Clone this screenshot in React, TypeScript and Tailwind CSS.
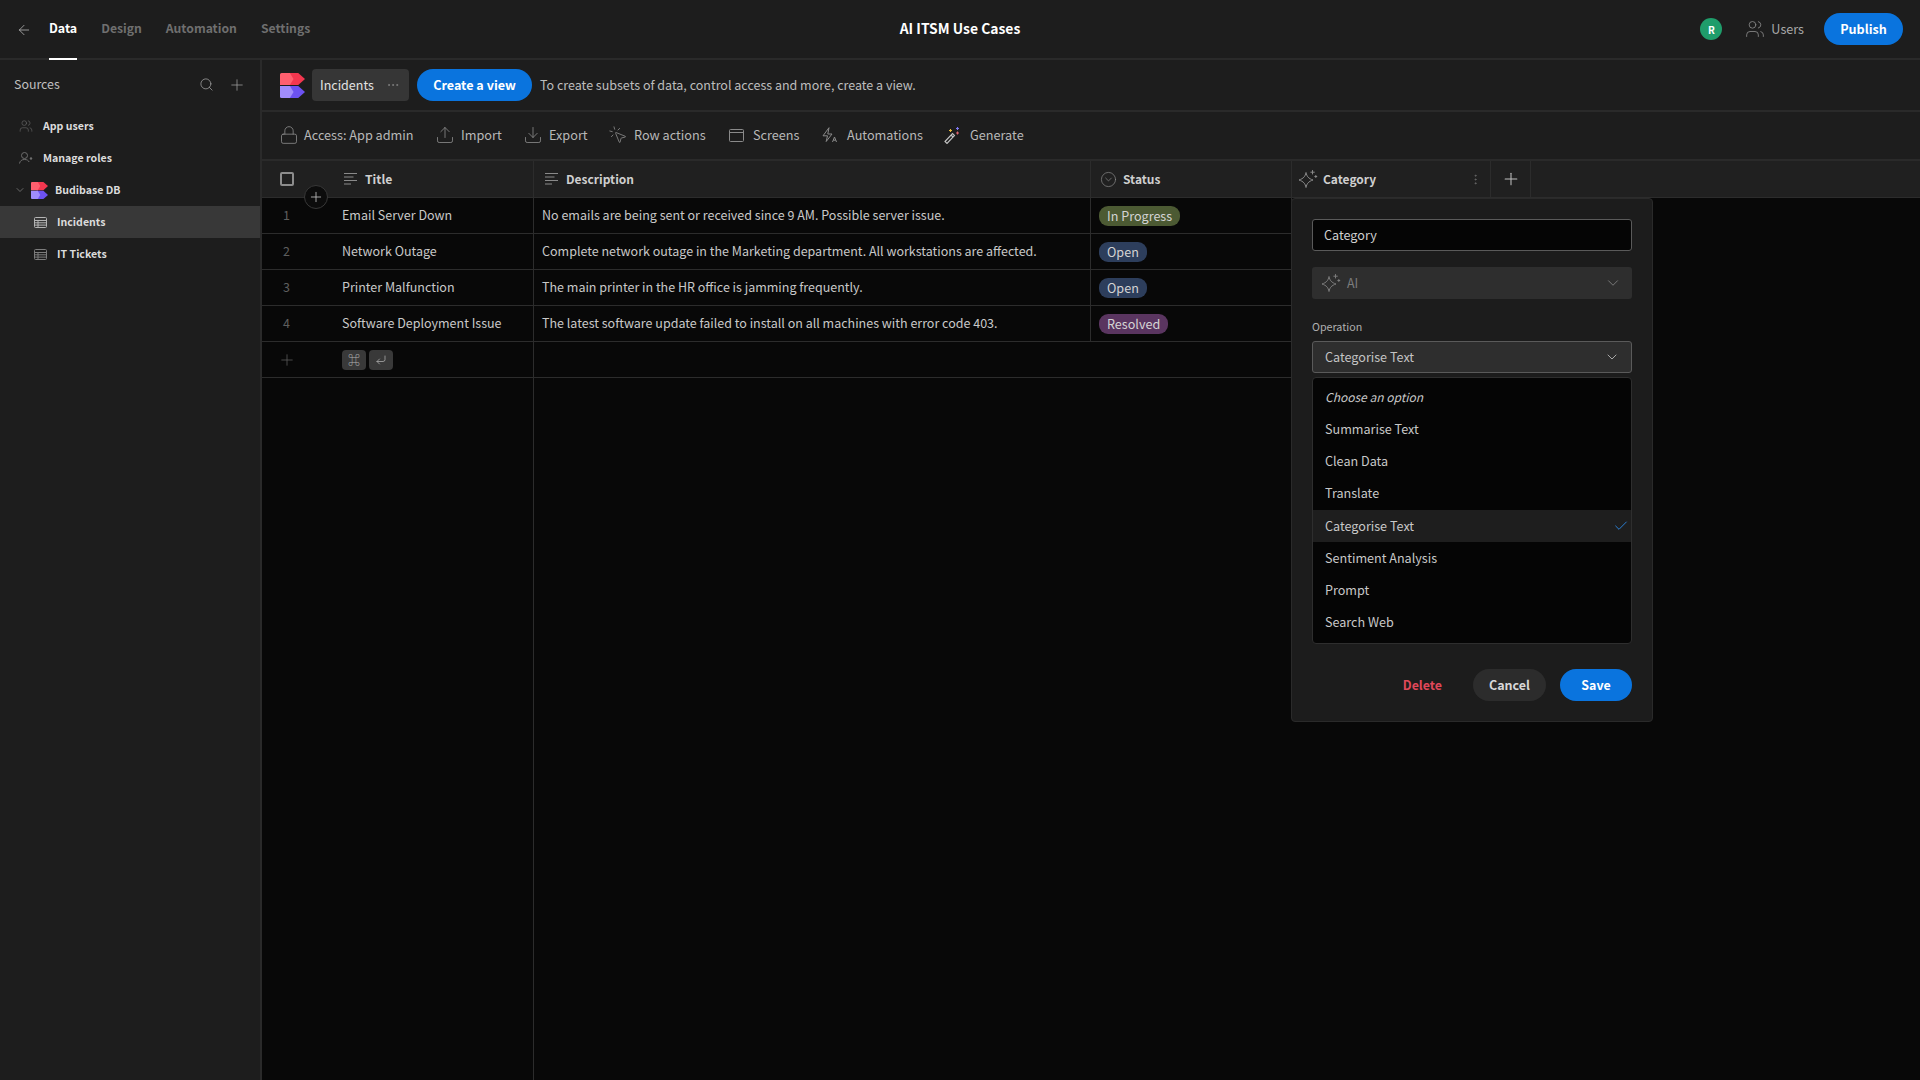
import {
  ArrowLeft,
  Check,
  ChevronDown,
  CircleChevronDown,
  CornerDownLeft,
  Download,
  Ellipsis,
  EllipsisVertical,
  Lock,
  MousePointerClick,
  Plus,
  Search,
  Upload,
  Users,
} from "lucide-react";

const rows = [
  {
    title: "Email Server Down",
    description: "No emails are being sent or received since 9 AM. Possible server issue.",
    status: "In Progress",
    chip: "bg-[#4c5a33]",
  },
  {
    title: "Network Outage",
    description: "Complete network outage in the Marketing department. All workstations are affected.",
    status: "Open",
    chip: "bg-[#2d3e5c]",
  },
  {
    title: "Printer Malfunction",
    description: "The main printer in the HR office is jamming frequently.",
    status: "Open",
    chip: "bg-[#2d3e5c]",
  },
  {
    title: "Software Deployment Issue",
    description: "The latest software update failed to install on all machines with error code 403.",
    status: "Resolved",
    chip: "bg-[#5a3560]",
  },
];

const operations = [
  "Summarise Text",
  "Clean Data",
  "Translate",
  "Categorise Text",
  "Sentiment Analysis",
  "Prompt",
  "Search Web",
];

function Logo({ className }: { className: string }) {
  return (
    <svg viewBox="0 0 24 24" className={className}>
      <path d="M8 0h9.500L24 5.800l-6.500 5.700H8Z" fill="#f2374f" />
      <path d="M0 1.500A1.500 1.500 0 0 1 1.500 0H9.500l3.500 5.800-3.500 5.700H0Z" fill="#ff5f6e" />
      <path d="M8 12.500h9.500l6.500 5.700-6.500 5.800H8Z" fill="#6c52f2" />
      <path d="M0 12.500h9.500l3.500 5.700-3.500 5.800H1.500A1.500 1.500 0 0 1 0 22.500Z" fill="#a08cfb" />
    </svg>
  );
}

function SparkleIcon({ className }: { className: string }) {
  return (
    <svg viewBox="0 0 20 20" fill="none" stroke="currentColor" strokeWidth="1" className={className}>
      <path d="M8 3.500c.8 4 2.500 6 7 7.500-4.500 1.500-6.200 3.500-7 7.500-.8-4-2.500-6-7-7.500 4.500-1.500 6.200-3.500 7-7.500Z" strokeLinejoin="round" />
      <path d="M14.500 1.500v3.500M12.800 3.200h3.500M17.800 6.500v2M16.800 7.500h2" strokeLinecap="round" />
    </svg>
  );
}

function LinesIcon() {
  return (
    <svg viewBox="0 0 14 12" fill="none" stroke="currentColor" strokeWidth="1" className="h-3 w-[14px] text-[#8a8a8a]">
      <path d="M0 .5h13M0 4h9.500M0 7.500h13M0 11h7" />
    </svg>
  );
}

function TableIcon({ muted }: { muted?: boolean }) {
  return (
    <svg viewBox="0 0 13 11" fill="none" stroke="currentColor" strokeWidth="1" className={`h-[11px] w-[13px] ${muted ? "text-[#7d7d7d]" : "text-[#b5b5b5]"}`}>
      <rect x=".5" y=".5" width="12" height="10" rx="1" />
      <path d="M.5 3.500h12M.5 5.800h12M.5 8.100h12M4 3.500v7" />
    </svg>
  );
}

function ToolbarItem({ icon, label, className }: { icon: React.ReactNode; label: string; className: string }) {
  return (
    <div className={`flex items-center ${className}`}>
      {icon}
      <span className="text-[12.7px] leading-[18px] text-[#b8b8b8]">{label}</span>
    </div>
  );
}

function App() {
  return (
    <div className="flex h-screen w-full flex-col overflow-hidden bg-[#1d1d1d] font-['Noto_Sans_CJK_SC',sans-serif] text-[12.5px] text-[#c8c8c8]">
      <header className="grid h-[60px] shrink-0 grid-cols-[1fr_auto_1fr] items-center border-b-2 border-[#2a2a2a]">
        <div className="flex h-full items-center pl-[16px]">
          <ArrowLeft className="mt-[2px] mr-[17px] h-[16px] w-[16px] text-[#b0b0b0]" strokeWidth={1.25} />
          <div className="relative flex h-full items-center">
            <span className="mb-[1px] text-[12.4px] font-semibold text-white">Data</span>
            <div className="absolute bottom-[-2px] left-0 h-[2px] w-[28px] bg-white" />
          </div>
          <span className="mb-[1px] ml-[24px] text-[12.2px] font-semibold text-[#6f6f6f]">Design</span>
          <span className="mb-[1px] ml-[24px] text-[12.2px] font-semibold text-[#6f6f6f]">Automation</span>
          <span className="mb-[1px] ml-[24px] text-[12.2px] font-semibold text-[#6f6f6f]">Settings</span>
        </div>
        <div className="mb-[1px] text-[13.9px] font-semibold text-white">AI ITSM Use Cases</div>
        <div className="flex items-center justify-end pr-[17px]">
          <div className="flex h-[22px] w-[22px] items-center justify-center rounded-full bg-[#1f9d6b] text-[10px] font-bold text-white">R</div>
          <Users className="ml-[23px] h-[20px] w-[20px] text-[#8a8a8a]" strokeWidth={1} />
          <span className="ml-[6px] text-[12.6px] text-[#a8a8a8]">Users</span>
          <button className="ml-[20px] h-[32px] w-[79px] rounded-full bg-[#0a74de] text-[12.6px] font-semibold text-white">Publish</button>
        </div>
      </header>

      <div className="flex min-h-0 flex-1">
        <aside className="w-[262px] shrink-0 border-r-2 border-[#2a2a2a]">
          <div className="flex h-[48px] items-center pt-[1px] pr-[14px] pl-[14px]">
            <span className="flex-1 text-[12.4px] text-[#c0c0c0]">Sources</span>
            <Search className="mr-[14px] h-[15px] w-[15px] text-[#a0a0a0]" strokeWidth={1.25} />
            <Plus className="h-[18px] w-[18px] text-[#a0a0a0]" strokeWidth={1} />
          </div>
          <div className="pt-[2px] text-[10.6px] font-semibold text-[#dcdcdc]">
            <div className="flex h-[32px] items-center pl-[19px]">
              <Users className="mr-[10px] h-[14px] w-[14px] text-[#6e6e6e]" strokeWidth={1} />
              App users
            </div>
            <div className="flex h-[32px] items-center pl-[19px]">
              <svg viewBox="0 0 14 14" fill="none" stroke="currentColor" strokeWidth="1" className="mr-[10px] h-[14px] w-[14px] text-[#6e6e6e]">
                <circle cx="5.500" cy="4.500" r="3" />
                <path d="M.5 12.500c.4-2.600 2.300-4 5-4s4 1 4.600 2.500" />
                <circle cx="12" cy="7.500" r="1.200" fill="currentColor" stroke="none" />
              </svg>
              Manage roles
            </div>
            <div className="flex h-[32px] items-center pl-[14px]">
              <ChevronDown className="mr-[5px] h-[12px] w-[12px] text-[#808080]" strokeWidth={1.5} />
              <Logo className="mr-[7px] h-[17px] w-[17px]" />
              Budibase DB
            </div>
            <div className="flex h-[32px] items-center bg-[#383838] pl-[34px]">
              <TableIcon />
              <span className="ml-[10px]">Incidents</span>
            </div>
            <div className="flex h-[32px] items-center pl-[34px]">
              <TableIcon muted />
              <span className="ml-[10px]">IT Tickets</span>
            </div>
          </div>
        </aside>

        <main className="flex min-w-0 flex-1 flex-col">
          <div className="flex h-[52px] shrink-0 items-center border-b-2 border-[#2a2a2a] pl-[18px]">
            <Logo className="h-[25px] w-[25px]" />
            <div className="ml-[7px] flex h-[32px] w-[97px] items-center rounded-[4px] bg-[#363636] pl-[8px]">
              <span className="flex-1 text-[#e2e2e2]">Incidents</span>
              <Ellipsis className="mr-[9px] h-[14px] w-[14px] text-[#8a8a8a]" strokeWidth={1.25} />
            </div>
            <button className="ml-[8px] h-[32px] w-[115px] rounded-full bg-[#0a74de] text-[12.6px] font-semibold text-white">Create a view</button>
            <span className="ml-[8px] text-[#bdbdbd]">To create subsets of data, control access and more, create a view.</span>
          </div>

          <div className="flex h-[49px] shrink-0 items-center border-b-2 border-[#2a2a2a] pb-[1px] pl-[17px]">
            <ToolbarItem className="w-[156px]" label="Access: App admin" icon={<Lock className="mr-[5px] h-[20px] w-[20px] text-[#8a8a8a]" strokeWidth={1} />} />
            <ToolbarItem className="w-[88px]" label="Import" icon={<Upload className="mr-[6px] h-[20px] w-[20px] text-[#8a8a8a]" strokeWidth={1} />} />
            <ToolbarItem className="w-[85px]" label="Export" icon={<Download className="mr-[6px] h-[20px] w-[20px] text-[#8a8a8a]" strokeWidth={1} />} />
            <ToolbarItem className="w-[119px]" label="Row actions" icon={<MousePointerClick className="mr-[6px] h-[20px] w-[20px] text-[#8a8a8a]" strokeWidth={1} />} />
            <ToolbarItem
              className="w-[92px]"
              label="Screens"
              icon={
                <svg viewBox="0 0 15 13" fill="none" stroke="currentColor" strokeWidth="1" className="mr-[9px] ml-[2px] h-[13px] w-[15px] text-[#8a8a8a]">
                  <rect x=".5" y=".5" width="14" height="12" rx="1" />
                  <path d="M.5 3.500h14" />
                </svg>
              }
            />
            <ToolbarItem
              className="w-[123px]"
              label="Automations"
              icon={
                <svg viewBox="0 0 17 16" fill="none" stroke="currentColor" strokeWidth="1" strokeLinejoin="round" className="mr-[8px] ml-[3px] h-[16px] w-[17px] text-[#8a8a8a]">
                  <path d="M7 .7 1 8.800h4.500L4.200 14.500 10 7H5.800Z" />
                  <path d="m10.500 15 2-5 2 5M11.300 13.200h2.400" />
                </svg>
              }
            />
            <ToolbarItem
              className="w-[90px]"
              label="Generate"
              icon={
                <svg viewBox="0 0 17 17" fill="none" strokeWidth="1.100" className="mr-[9px] ml-[2px] h-[17px] w-[17px]">
                  <path d="m1 14.500 7.500-8 2 2-7.500 8Z" stroke="#c4c4c4" fill="#1d1d1d" />
                  <path d="m7 8 2 2" stroke="#c4c4c4" />
                  <path d="M5 3.500h3M6.500 2v3" stroke="#e8b93c" />
                  <path d="M12 1.500h3M13.500 0v3" stroke="#7f78f0" />
                  <path d="M12 6h3M13.500 4.500v3" stroke="#e0626e" />
                </svg>
              }
            />
          </div>

          <div className="relative flex min-h-0 flex-1 bg-[#080808]">
            <div className="w-[272px] shrink-0 border-r border-[#2c2c2c]">
              <div className="flex h-[37px] items-center border-b border-[#2c2c2c] bg-[#202020] pl-[18px]">
                <div className="h-[14px] w-[14px] rounded-[2px] border-2 border-[#8c8c8c]" />
                <div className="ml-[50px] flex items-center text-[12.2px] font-semibold text-[#cfcfcf]">
                  <LinesIcon />
                  <span className="ml-[7px]">Title</span>
                </div>
              </div>
              {rows.map((row, i) => (
                <div key={row.title} className="flex h-[36px] items-center border-b border-[#2c2c2c]">
                  <span className="w-[80px] pr-[31px] text-center text-[#5e5e5e]">{i + 1}</span>
                  <span className="text-[#c8c8c8]">{row.title}</span>
                </div>
              ))}
              <div className="flex h-[36px] items-center border-b border-[#2c2c2c]">
                <div className="flex w-[80px] justify-center pr-[31px]">
                  <Plus className="h-[18px] w-[18px] text-[#5e5e5e]" strokeWidth={1} />
                </div>
                <div className="flex h-[20px] w-[24px] items-center justify-center rounded-[4px] bg-[#393939] text-[12px] leading-none text-[#b0b0b0]">⌘</div>
                <div className="ml-[3px] flex h-[20px] w-[24px] items-center justify-center rounded-[4px] bg-[#393939] text-[#b0b0b0]">
                  <CornerDownLeft className="h-[12px] w-[12px]" strokeWidth={1.5} />
                </div>
              </div>
            </div>

            <div className="min-w-0 flex-1">
              <div className="flex h-[37px] items-center border-b border-[#2c2c2c] bg-[#202020] text-[12px] font-semibold text-[#cfcfcf]">
                <div className="flex h-full w-[557px] items-center border-r border-[#2c2c2c] pl-[11px]">
                  <LinesIcon />
                  <span className="ml-[7px]">Description</span>
                </div>
                <div className="flex h-full w-[201px] items-center border-r border-[#2c2c2c] pl-[9px]">
                  <CircleChevronDown className="h-[17px] w-[17px] text-[#8a8a8a]" strokeWidth={1} />
                  <span className="ml-[6px]">Status</span>
                </div>
                <div className="flex h-full w-[199px] items-center border-r border-[#2c2c2c] pl-[6px]">
                  <SparkleIcon className="h-[20px] w-[20px] text-[#8a8a8a]" />
                  <span className="ml-[5px] flex-1">Category</span>
                  <EllipsisVertical className="mr-[8px] h-[13px] w-[13px] text-[#6e6e6e]" strokeWidth={1.5} />
                </div>
                <div className="flex h-full w-[40px] items-center justify-center border-r border-[#2c2c2c]">
                  <Plus className="h-[20px] w-[20px] text-[#c0c0c0]" strokeWidth={1.25} />
                </div>
              </div>
              {rows.map((row) => (
                <div key={row.title} className="flex h-[36px] w-[758px] items-center border-b border-[#2c2c2c]">
                  <div className="flex h-full w-[557px] items-center border-r border-[#2c2c2c] pl-[8px] text-[#c8c8c8]">{row.description}</div>
                  <div className="flex h-full flex-1 items-center border-r border-[#2c2c2c] pl-[8px]">
                    <span className={`${row.chip} rounded-[9px] px-[8px] text-[12.6px] leading-[20px] text-[#d4d4d4]`}>{row.status}</span>
                  </div>
                </div>
              ))}
              <div className="h-[36px] w-[758px] border-b border-[#2c2c2c]" />
            </div>

            <div className="absolute top-[24px] left-[42px] flex h-[24px] w-[24px] items-center justify-center rounded-full border border-[#383838] bg-[#0c0c0c]">
              <Plus className="h-[16px] w-[16px] text-[#c0c0c0]" strokeWidth={1.25} />
            </div>

            <div className="absolute top-[37px] left-[1029px] h-[524px] w-[362px] rounded-[4px] border border-[#2a2a2a] bg-[#1c1c1c] px-[20px] pt-[20px]">
              <div className="flex h-[32px] items-center rounded-[3px] border border-[#5a5a5a] bg-[#050505] pl-[11px] text-[12.6px] text-[#d0d0d0]">Category</div>
              <div className="mt-[16px] flex h-[32px] items-center rounded-[3px] bg-[#2e2e2e] pr-[10px] pl-[9px] text-[#7c7c7c]">
                <SparkleIcon className="h-[20px] w-[20px]" />
                <span className="ml-[6px] flex-1">AI</span>
                <ChevronDown className="h-[18px] w-[18px]" strokeWidth={1.25} />
              </div>
              <div className="mt-[20px] text-[10.7px] leading-[16px] text-[#b0b0b0]">Operation</div>
              <div className="mt-[6px] flex h-[32px] items-center rounded-[3px] border border-[#5a5a5a] bg-[#2e2e2e] pr-[11px] pl-[12px] text-[12.6px] text-[#c4c4c4]">
                <span className="flex-1">Categorise Text</span>
                <ChevronDown className="h-[16px] w-[16px] text-[#c0c0c0]" strokeWidth={1.25} />
              </div>
              <div className="mt-[4px] rounded-[4px] border border-[#2e2e2e] bg-[#050505] pt-[3px] pb-[5px] text-[12.6px]">
                <div className="flex h-[32px] items-center pl-[12px] text-[12px] text-[#c8c8c8] italic">Choose an option</div>
                {operations.map((op) => {
                  const selected = op === "Categorise Text";
                  return (
                    <div key={op} className={`flex h-[32px] items-center pl-[12px] text-[#c8c8c8] ${selected ? "mt-[1px] bg-[#1e1e1e] pr-[2px]" : ""}`}>
                      <span className="flex-1">{op}</span>
                      {selected && <Check className="h-[16px] w-[16px] text-[#2a7fd4]" strokeWidth={1.5} />}
                    </div>
                  );
                })}
              </div>
              <div className="mt-[25px] flex items-center justify-end">
                <span className="mr-[31px] text-[12.4px] font-semibold text-[#e0485a]">Delete</span>
                <button className="h-[32px] w-[73px] rounded-full bg-[#2c2c2c] text-[12.5px] font-semibold text-[#d8d8d8]">Cancel</button>
                <button className="ml-[14px] h-[32px] w-[72px] rounded-full bg-[#0a74de] text-[12.4px] font-semibold text-white">Save</button>
              </div>
            </div>
          </div>
        </main>
      </div>
    </div>
  );
}

export default App;
